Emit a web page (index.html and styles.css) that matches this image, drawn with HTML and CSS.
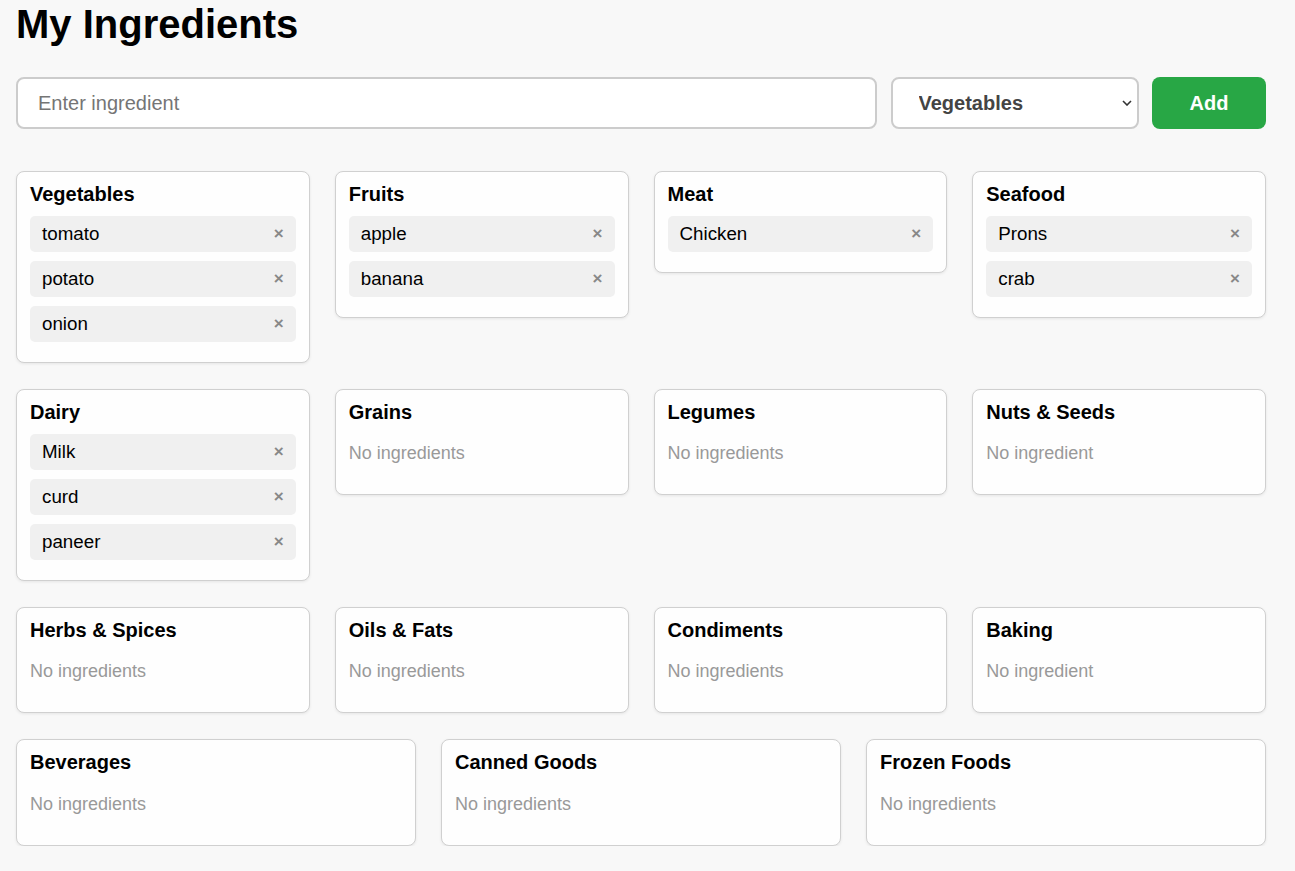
FILE: index.html
```html
<!DOCTYPE html>
<html lang="en">
<head>
<meta charset="utf-8">
<title>My Ingredients</title>
<link rel="stylesheet" href="styles.css">
</head>
<body>
<div class="app">
  <h1 class="page-title">My Ingredients</h1>
  <form class="add-form" onsubmit="return false">
    <input class="ingredient-input" type="text" placeholder="Enter ingredient">
    <div class="select-wrap">
      <select class="category-select">
        <option>Vegetables</option>
        <option>Fruits</option>
        <option>Meat</option>
        <option>Seafood</option>
        <option>Dairy</option>
      </select>
      <svg class="select-arrow" width="10" height="6" viewBox="0 0 10 6"><path d="M1 1l4 4 4-4" fill="none" stroke="#333" stroke-width="1.6"/></svg>
    </div>
    <button class="add-btn" type="submit">Add</button>
  </form>

  <div class="categories">
    <section class="card">
      <h3 class="card-title">Vegetables</h3>
      <ul class="items">
        <li class="item"><span>tomato</span><span class="remove">&times;</span></li>
        <li class="item"><span>potato</span><span class="remove">&times;</span></li>
        <li class="item"><span>onion</span><span class="remove">&times;</span></li>
      </ul>
    </section>
    <section class="card">
      <h3 class="card-title">Fruits</h3>
      <ul class="items">
        <li class="item"><span>apple</span><span class="remove">&times;</span></li>
        <li class="item"><span>banana</span><span class="remove">&times;</span></li>
      </ul>
    </section>
    <section class="card">
      <h3 class="card-title">Meat</h3>
      <ul class="items">
        <li class="item"><span>Chicken</span><span class="remove">&times;</span></li>
      </ul>
    </section>
    <section class="card">
      <h3 class="card-title">Seafood</h3>
      <ul class="items">
        <li class="item"><span>Prons</span><span class="remove">&times;</span></li>
        <li class="item"><span>crab</span><span class="remove">&times;</span></li>
      </ul>
    </section>
    <section class="card">
      <h3 class="card-title">Dairy</h3>
      <ul class="items">
        <li class="item"><span>Milk</span><span class="remove">&times;</span></li>
        <li class="item"><span>curd</span><span class="remove">&times;</span></li>
        <li class="item"><span>paneer</span><span class="remove">&times;</span></li>
      </ul>
    </section>
    <section class="card">
      <h3 class="card-title">Grains</h3>
      <p class="empty">No ingredients</p>
    </section>
    <section class="card">
      <h3 class="card-title">Legumes</h3>
      <p class="empty">No ingredients</p>
    </section>
    <section class="card">
      <h3 class="card-title">Nuts &amp; Seeds</h3>
      <p class="empty">No ingredient</p>
    </section>
    <section class="card">
      <h3 class="card-title">Herbs &amp; Spices</h3>
      <p class="empty">No ingredients</p>
    </section>
    <section class="card">
      <h3 class="card-title">Oils &amp; Fats</h3>
      <p class="empty">No ingredients</p>
    </section>
    <section class="card">
      <h3 class="card-title">Condiments</h3>
      <p class="empty">No ingredients</p>
    </section>
    <section class="card">
      <h3 class="card-title">Baking</h3>
      <p class="empty">No ingredient</p>
    </section>
    <section class="card">
      <h3 class="card-title">Beverages</h3>
      <p class="empty">No ingredients</p>
    </section>
    <section class="card">
      <h3 class="card-title">Canned Goods</h3>
      <p class="empty">No ingredients</p>
    </section>
    <section class="card">
      <h3 class="card-title">Frozen Foods</h3>
      <p class="empty">No ingredients</p>
    </section>
  </div>
</div>
</body>
</html>
```

FILE: styles.css
```css
* { box-sizing: border-box; }

html, body {
  margin: 0;
  padding: 0;
  background: #f8f8f8;
}

body {
  font-family: "Liberation Sans", Arial, sans-serif;
  color: #000;
}

.app {
  padding: 1px 29px 0 16px;
}

.page-title {
  margin: 0;
  font-size: 40px;
  font-weight: bold;
  line-height: 46px;
}

.add-form {
  display: flex;
  gap: 13.5px;
  margin-top: 30px;
  height: 52px;
}

.ingredient-input {
  flex: 1;
  min-width: 0;
  height: 52px;
  border: 2px solid #cccccc;
  border-radius: 8px;
  background: #fff;
  padding: 0 20px;
  font-family: inherit;
  font-size: 20px;
  color: #000;
  outline: none;
}

.ingredient-input::placeholder {
  color: #757575;
}

.select-wrap {
  position: relative;
  width: 248px;
  flex: 0 0 248px;
}

.category-select {
  appearance: none;
  -webkit-appearance: none;
  width: 100%;
  height: 52px;
  border: 2px solid #cccccc;
  border-radius: 8px;
  background: #fff;
  padding: 0 30px 0 26px;
  font-family: inherit;
  font-size: 20px;
  font-weight: bold;
  color: #444;
  outline: none;
}

.select-arrow {
  position: absolute;
  right: 7px;
  top: 23px;
  pointer-events: none;
}

.add-btn {
  flex: 0 0 114px;
  height: 52px;
  border: none;
  border-radius: 8px;
  background: #28a745;
  color: #fff;
  font-family: inherit;
  font-size: 20px;
  font-weight: bold;
  cursor: pointer;
}

.categories {
  display: flex;
  flex-wrap: wrap;
  align-items: flex-start;
  gap: 26px 25px;
  margin-top: 41.7px;
}

.card {
  flex: 1 1 250px;
  background: #fefefe;
  border: 1px solid #d0d0d0;
  border-radius: 8px;
  box-shadow: 0 1px 3px rgba(0, 0, 0, 0.08);
  padding: 11px 13px;
}

.card-title {
  margin: 0 0 10px;
  font-size: 20px;
  font-weight: bold;
  line-height: 23px;
}

.items {
  list-style: none;
  margin: 0;
  padding: 0;
}

.item {
  display: flex;
  justify-content: space-between;
  align-items: center;
  background: #f0f0f0;
  border-radius: 5px;
  padding: 8px 12px;
  margin-bottom: 8.3px;
  font-size: 18.75px;
  line-height: 20.7px;
}

.remove {
  color: #888;
  font-weight: bold;
  font-size: 17px;
  cursor: pointer;
}

.empty {
  margin: 19.5px 0;
  font-size: 18px;
  line-height: 20.7px;
  color: #999;
}
```
